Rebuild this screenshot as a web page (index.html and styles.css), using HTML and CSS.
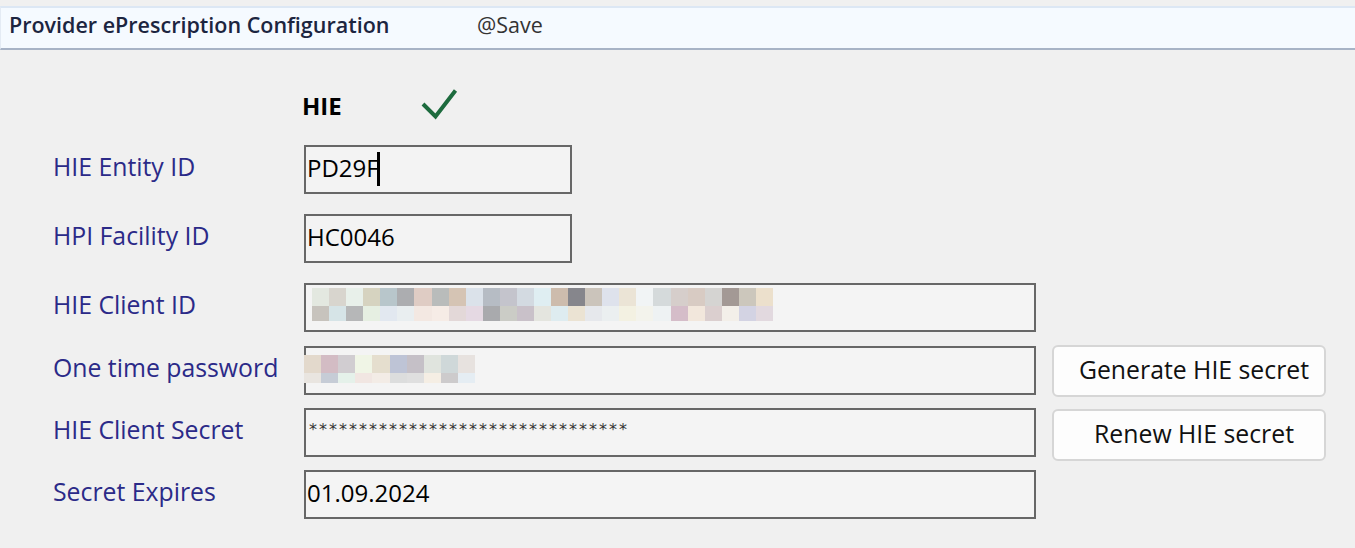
FILE: index.html
```html
<!DOCTYPE html>
<html lang="en">
<head>
<meta charset="utf-8">
<title>Provider ePrescription Configuration</title>
<link rel="stylesheet" href="styles.css">
</head>
<body>
<div class="header">
  <span class="title">Provider ePrescription Configuration</span>
  <span class="save">@Save</span>
</div>
<main class="form">
  <div class="heading-row">
    <span class="heading">HIE</span>
    <svg class="check" width="38" height="32" viewBox="0 0 38 32" aria-hidden="true"><path d="M3 16 L15.5 28.5 L35.5 2.5" fill="none" stroke="#1d6b3e" stroke-width="4"/></svg>
  </div>
  <div class="row gap-24">
    <span class="label">HIE Entity ID</span>
    <div class="box short"><span class="val">PD29F</span><span class="caret"></span></div>
  </div>
  <div class="row gap-20">
    <span class="label">HPI Facility ID</span>
    <div class="box short"><span class="val">HC0046</span></div>
  </div>
  <div class="row gap-20">
    <span class="label">HIE Client ID</span>
    <div class="box long blur-client">
      <div class="mosaic mosaic-client">
        <span style="background:#e3e8e0"></span><span style="background:#d8d5ce"></span><span style="background:#e8f0ea"></span><span style="background:#d6d3c0"></span><span style="background:#b8c6cb"></span><span style="background:#acadb0"></span><span style="background:#dfccc4"></span><span style="background:#b9bcbb"></span><span style="background:#d5c4b4"></span><span style="background:#dbe2ea"></span><span style="background:#b6bcc4"></span><span style="background:#c4c4cc"></span><span style="background:#d3dae1"></span><span style="background:#dfeef2"></span><span style="background:#cdbcad"></span><span style="background:#86868c"></span><span style="background:#cbc4bb"></span><span style="background:#dee2ec"></span><span style="background:#ebe4d6"></span><span style="background:#f1f4f5"></span><span style="background:#d5dadb"></span><span style="background:#d6cecb"></span><span style="background:#d8cbc3"></span><span style="background:#d5d4d2"></span><span style="background:#a39995"></span><span style="background:#ccc7bc"></span><span style="background:#ece0cc"></span>
        <span style="background:#c7c3bd"></span><span style="background:#d6e4e7"></span><span style="background:#b6b7b8"></span><span style="background:#e6efe2"></span><span style="background:#e2e8f0"></span><span style="background:#e9eef0"></span><span style="background:#f3e8e2"></span><span style="background:#f6ece6"></span><span style="background:#e3d8d8"></span><span style="background:#e5d9e3"></span><span style="background:#a9aaad"></span><span style="background:#cbccc6"></span><span style="background:#c9c1c9"></span><span style="background:#e4e5df"></span><span style="background:#deecf0"></span><span style="background:#ebe3d3"></span><span style="background:#e6e8ec"></span><span style="background:#ebeff0"></span><span style="background:#f3f1e2"></span><span style="background:#f3f3ec"></span><span style="background:#eef2f3"></span><span style="background:#d5bdc9"></span><span style="background:#f2e7dc"></span><span style="background:#dbcfcf"></span><span style="background:#f3efe9"></span><span style="background:#d3d3e3"></span><span style="background:#e2d9df"></span>
      </div>
    </div>
  </div>
  <div class="row gap-14">
    <span class="label">One time password</span>
    <div class="box long blur-otp">
      <div class="mosaic mosaic-otp">
        <span style="background:#e3d9cc"></span><span style="background:#d3bcc4"></span><span style="background:#d1cdd1"></span><span style="background:#f0f5e6"></span><span style="background:#e5dece"></span><span style="background:#bec4d6"></span><span style="background:#c5c0c7"></span><span style="background:#e0e4de"></span><span style="background:#cfd8d9"></span><span style="background:#e7e2df"></span>
        <span style="background:#e9e5e0"></span><span style="background:#c6ccd6"></span><span style="background:#e5f1ea"></span><span style="background:#f1e6e2"></span><span style="background:#f3ece6"></span><span style="background:#dcdddd"></span><span style="background:#dfdfdf"></span><span style="background:#f5eee4"></span><span style="background:#cdcbcc"></span><span style="background:#e5edf3"></span>
      </div>
    </div>
    <button class="btn btn-generate" type="button">Generate HIE secret</button>
  </div>
  <div class="row gap-13">
    <span class="label">HIE Client Secret</span>
    <div class="box long secret"><span class="stars">********************************</span></div>
    <button class="btn btn-renew" type="button">Renew HIE secret</button>
  </div>
  <div class="row gap-13">
    <span class="label">Secret Expires</span>
    <div class="box long"><span class="val">01.09.2024</span></div>
  </div>
</main>
</body>
</html>
```
FILE: styles.css
```css
html, body {
  margin: 0;
  padding: 0;
}

body {
  background: #f0f0f0;
  font-family: "Open Sans", "Noto Sans", sans-serif;
  color: #000;
  padding-top: 6px;
}

.header {
  display: flex;
  align-items: flex-start;
  height: 40px;
  background: #f5faff;
  border-top: 2px solid #dce7f4;
  border-bottom: 2px solid #a7b3c6;
  border-left: 1px solid #e4ebf4;
  padding-left: 8px;
  line-height: 34px;
  font-size: 21.5px;
}

.title {
  width: 468px;
  font-weight: 600;
  color: #1c2540;
}

.save {
  color: #333;
}

.form {
  display: flex;
  flex-direction: column;
  padding-left: 53px;
}

.heading-row {
  display: flex;
  align-items: center;
  height: 30px;
  margin-top: 41px;
}

.heading {
  margin-left: 249px;
  font-weight: 700;
  font-size: 24px;
  line-height: 30px;
  color: #000;
}

.check {
  margin-left: 78px;
  align-self: flex-start;
  margin-top: -3px;
}

.row {
  display: flex;
  align-items: center;
  height: 49px;
}

.gap-24 { margin-top: 24px; }
.gap-20 { margin-top: 20px; }
.gap-14 { margin-top: 14px; }
.gap-13 { margin-top: 13px; }

.label {
  width: 251px;
  flex: none;
  font-size: 24.8px;
  color: #2b2a88;
  padding-bottom: 7px;
}

.box {
  flex: none;
  box-sizing: border-box;
  height: 49px;
  border: 2px solid #676767;
  background: #f3f3f3;
  display: flex;
  align-items: center;
  padding: 0 0 5px 1px;
  font-size: 24px;
  color: #000;
}

.short { width: 268px; }
.long { width: 732px; background: #f4f4f4; }

.caret {
  display: inline-block;
  width: 3px;
  height: 34px;
  background: #000;
  margin-left: -2px;
  margin-top: 4px;
}

.blur-client {
  align-items: flex-start;
  padding: 3px 0 0 6px;
}

.blur-otp {
  align-items: flex-start;
  padding: 7px 0 0 0;
}

.mosaic {
  display: grid;
}

.mosaic-client {
  width: 461px;
  grid-template-columns: repeat(27, 1fr);
  grid-template-rows: 18px 15px;
}

.mosaic-otp {
  width: 171px;
  margin-left: -2px;
  grid-template-columns: repeat(10, 1fr);
  grid-template-rows: 18px 10px;
}

.secret {
  align-items: flex-start;
  padding: 10px 0 0 3px;
}

.stars {
  font-family: "DejaVu Sans", sans-serif;
  font-size: 16px;
  letter-spacing: 2px;
  color: #333;
}

.btn {
  flex: none;
  margin-left: 16px;
  box-sizing: border-box;
  width: 274px;
  height: 52px;
  border: 2px solid #d6d6d6;
  border-radius: 6px;
  background: #fdfdfd;
  font-family: "Open Sans", "Noto Sans", sans-serif;
  font-size: 24.8px;
  color: #111;
  padding: 0 0 4px 10px;
  display: flex;
  align-items: center;
  justify-content: center;
}

.btn-renew {
  margin-top: 5px;
}
```
